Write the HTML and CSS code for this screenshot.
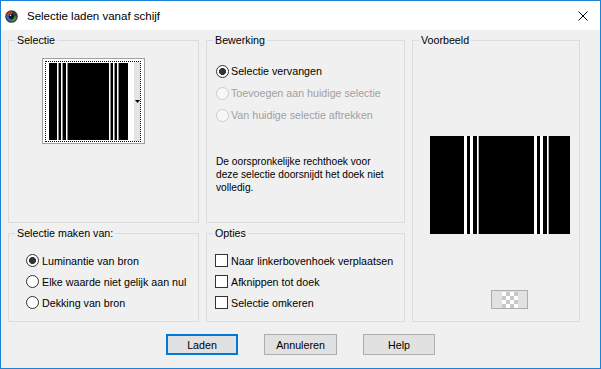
FILE: index.html
```html
<!DOCTYPE html>
<html lang="nl">
<head>
    <meta charset="UTF-8">
    <title>Selectie laden vanaf schijf</title>
    <link rel="stylesheet" href="styles.css">
</head>
<body>
<div class="window">
    <div class="titlebar">
        <svg class="appIcon" width="13" height="13" viewBox="0 0 13 13">
            <circle cx="6.5" cy="6.5" r="6.3" fill="#3a3a3a"/>
            <circle cx="6.5" cy="6.5" r="4" fill="none" stroke="#2f9e3a" stroke-width="2.2" stroke-dasharray="6 19"/>
            <circle cx="6.5" cy="6.5" r="4" fill="none" stroke="#2a6fd0" stroke-width="2.2" stroke-dasharray="0 6 7 12"/>
            <circle cx="6.5" cy="6.5" r="4" fill="none" stroke="#d63a2a" stroke-width="2.2" stroke-dasharray="0 13 6 6"/>
            <circle cx="6.5" cy="6.5" r="2.2" fill="#0c0c0c"/>
            <circle cx="5.6" cy="5.4" r="0.8" fill="#9ad0ff"/>
        </svg>
        <span class="title">Selectie laden vanaf schijf</span>
        <svg class="closeBtn" width="10" height="10" viewBox="0 0 10 10">
            <path d="M0.5 0.5 L9.5 9.5 M9.5 0.5 L0.5 9.5" stroke="#000" stroke-width="1" fill="none"/>
        </svg>
    </div>
    <div class="client">
        <div class="groups">
            <fieldset class="group gSelectie">
                <legend>Selectie</legend>
                <div class="thumb">
                    <div class="thumbInner">
                        <svg width="94" height="79" viewBox="0 0 94 79">
                            <rect x="0" y="0" width="94" height="79" fill="#fff"/>
                            <rect x="3" y="1" width="79" height="77" fill="#000"/>
                            <rect x="11" y="1" width="1" height="77" fill="#fff"/>
                            <rect x="12" y="1" width="1" height="77" fill="#888"/>
                            <rect x="15" y="1" width="1" height="77" fill="#fff"/>
                            <rect x="16" y="1" width="1" height="77" fill="#888"/>
                            <rect x="20" y="1" width="1" height="77" fill="#fff"/>
                            <rect x="21" y="1" width="1" height="77" fill="#888"/>
                            <rect x="63" y="1" width="1" height="77" fill="#fff"/>
                            <rect x="64" y="1" width="1" height="77" fill="#888"/>
                            <rect x="67" y="1" width="1" height="77" fill="#fff"/>
                            <rect x="68" y="1" width="1" height="77" fill="#888"/>
                            <rect x="71" y="1" width="1" height="77" fill="#fff"/>
                            <rect x="72" y="1" width="1" height="77" fill="#888"/>
                            <rect x="88" y="0" width="6" height="79" fill="#e3e3e3"/>
                            <polygon points="89,38 94,38 91.5,41" fill="#000"/>
                        </svg>
                    </div>
                </div>
            </fieldset>

            <fieldset class="group gBewerking">
                <legend>Bewerking</legend>
                <div class="optList">
                    <div class="opt"><span class="radio checked"></span>Selectie vervangen</div>
                    <div class="opt disabled"><span class="radio"></span>Toevoegen aan huidige selectie</div>
                    <div class="opt disabled"><span class="radio"></span>Van huidige selectie aftrekken</div>
                </div>
                <p class="note">De oorspronkelijke rechthoek voor<br>deze selectie doorsnijdt het doek niet<br>volledig.</p>
            </fieldset>

            <fieldset class="group gVoorbeeld">
                <legend>Voorbeeld</legend>
                <svg class="preview" width="140" height="98" viewBox="0 0 140 98">
                    <rect x="0" y="0" width="140" height="98" fill="#000"/>
                    <rect x="34" y="0" width="3" height="98" fill="#fff"/>
                    <rect x="40" y="0" width="3" height="98" fill="#fff"/>
                    <rect x="47" y="0" width="1" height="98" fill="#fff"/>
                    <rect x="48" y="0" width="1" height="98" fill="#aaa"/>
                    <rect x="104" y="0" width="3" height="98" fill="#fff"/>
                    <rect x="110" y="0" width="3" height="98" fill="#fff"/>
                    <rect x="117" y="0" width="1" height="98" fill="#fff"/>
                    <rect x="118" y="0" width="1" height="98" fill="#aaa"/>
                </svg>
                <div class="checkerBtn"><span class="checker"></span></div>
            </fieldset>

            <fieldset class="group gBron">
                <legend>Selectie maken van:</legend>
                <div class="optList">
                    <div class="opt"><span class="radio checked"></span>Luminantie van bron</div>
                    <div class="opt"><span class="radio"></span>Elke waarde niet gelijk aan nul</div>
                    <div class="opt"><span class="radio"></span>Dekking van bron</div>
                </div>
            </fieldset>

            <fieldset class="group gOpties">
                <legend>Opties</legend>
                <div class="optList">
                    <div class="opt"><span class="check"></span>Naar linkerbovenhoek verplaatsen</div>
                    <div class="opt"><span class="check"></span>Afknippen tot doek</div>
                    <div class="opt"><span class="check"></span>Selectie omkeren</div>
                </div>
            </fieldset>
        </div>

        <div class="buttons">
            <div class="btn default">Laden</div>
            <div class="btn wide">Annuleren</div>
            <div class="btn">Help</div>
        </div>
    </div>
</div>
</body>
</html>
```

FILE: styles.css
```css
*{
    margin:0;
    padding:0;
    box-sizing: border-box;
}
body{
    background: #fff;
    font-family: "Liberation Sans", Arial, sans-serif;
    font-size: 10.7px;
    color: #000;
}
.window{
    width: 601px;
    height: 369px;
    border: 1px solid #1a83d8;
    display: flex;
    flex-direction: column;
}
/* title bar */
.titlebar{
    height: 29px;
    background: #fff;
    display: flex;
    align-items: center;
}
.appIcon{
    margin-left: 4px;
    margin-top: 1px;
}
.title{
    margin-left: 9px;
    font-size: 11.5px;
}
.closeBtn{
    margin-left: auto;
    margin-right: 12px;
    margin-top: 1px;
}
/* client area */
.client{
    flex: 1;
    background: #f0f0f0;
    padding: 4px 7px 0 7px;
}
.groups{
    display: grid;
    grid-template-columns: 191px 199px 168px;
    grid-template-rows: 189px 95px;
    column-gap: 7px;
    row-gap: 4px;
}
.group{
    border: 1px solid #dcdcdc;
    min-width: 0;
    margin: 0;
    padding: 0;
}
.group legend{
    margin-left: 6px;
    padding: 0 2px;
    line-height: 13px;
}
.gVoorbeeld{
    grid-column: 3;
    grid-row: 1 / span 2;
}
.gBron{
    grid-column: 1;
    grid-row: 2;
}
.gOpties{
    grid-column: 2;
    grid-row: 2;
}
/* selectie thumbnail */
.thumb{
    width: 103px;
    height: 86px;
    margin: 11px 0 0 33px;
    border: 1px solid #a0a0a0;
    background: #fff;
    padding: 2px 3px 1px 2px;
}
.thumbInner{
    width: 96px;
    height: 81px;
    border: 1px dotted #000;
}
.thumbInner svg{
    display: block;
}
/* radio and checkbox rows */
.optList{
    margin-top: 13px;
    padding-left: 9px;
}
.opt{
    height: 22px;
    display: flex;
    align-items: center;
    white-space: nowrap;
}
.opt.disabled{
    color: #a0a0a0;
}
.radio{
    width: 13px;
    height: 13px;
    border-radius: 50%;
    border: 1px solid #333;
    background: #fff;
    margin-right: 2px;
    flex-shrink: 0;
}
.radio.checked{
    background: radial-gradient(circle, #333 0, #333 3.2px, #fff 3.8px);
}
.disabled .radio{
    border-color: #cccccc;
    background: #f7f7f7;
}
.check{
    width: 13px;
    height: 13px;
    border: 1px solid #333;
    background: #fff;
    margin-right: 3px;
    flex-shrink: 0;
}
.note{
    margin-top: 29px;
    padding-left: 9px;
    line-height: 13px;
    font-size: 10.2px;
}
.gBron .optList{
    margin-top: 10px;
    padding-left: 17px;
}
.gBron .opt,
.gOpties .opt{
    height: 21px;
}
.gBron .radio{
    margin-right: 3px;
}
.gOpties .optList{
    margin-top: 10px;
    padding-left: 8px;
}
/* voorbeeld */
.preview{
    display: block;
    margin: 89px 0 0 17px;
}
.checkerBtn{
    width: 37px;
    height: 19px;
    margin: 56px 0 0 78px;
    background: #e1e1e1;
    border: 1px solid #adadad;
    display: flex;
    align-items: center;
    justify-content: center;
}
.checker{
    width: 16px;
    height: 16px;
    background-color: #fff;
    background-image:
        linear-gradient(45deg, #c8c8c8 25%, transparent 25%, transparent 75%, #c8c8c8 75%),
        linear-gradient(45deg, #c8c8c8 25%, transparent 25%, transparent 75%, #c8c8c8 75%);
    background-size: 8px 8px;
    background-position: 0 0, 4px 4px;
}
/* buttons */
.buttons{
    margin-top: 12px;
    display: flex;
    justify-content: center;
    gap: 26px;
}
.btn{
    width: 72px;
    height: 21px;
    background: #e1e1e1;
    border: 1px solid #adadad;
    display: flex;
    align-items: center;
    justify-content: center;
}
.btn.wide{
    width: 73px;
}
.btn.default{
    border: 2px solid #0078d7;
}
```
